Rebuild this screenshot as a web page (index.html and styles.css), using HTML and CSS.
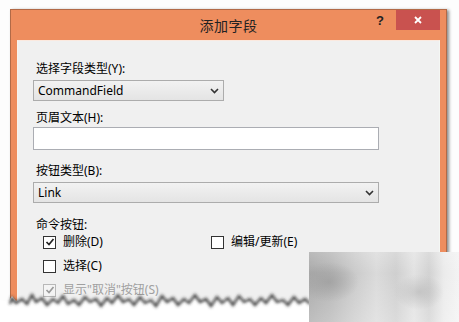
FILE: index.html
```html
<!DOCTYPE html>
<html lang="zh">
<head>
<meta charset="utf-8">
<link rel="stylesheet" href="styles.css">
</head>
<body>
<div class="window">
  <div class="titlebar">
    <div></div>
    <div class="title">添加字段</div>
    <div class="controls">
      <span class="help">?</span>
      <span class="close">
        <svg width="10" height="10" viewBox="0 0 10 10"><path d="M2 2L8 8M8 2L2 8" stroke="#fff" stroke-width="1.8"/></svg>
      </span>
    </div>
  </div>
  <div class="content">
    <div class="label">选择字段类型(Y):</div>
    <div class="select short"><span>CommandField</span><svg class="chev" width="9" height="6" viewBox="0 0 9 6"><path d="M1 1L4.5 4.5L8 1" fill="none" stroke="#333" stroke-width="1.6"/></svg></div>
    <div class="label l2">页眉文本(H):</div>
    <div class="input"></div>
    <div class="label l3">按钮类型(B):</div>
    <div class="select wide"><span>Link</span><svg class="chev" width="9" height="6" viewBox="0 0 9 6"><path d="M1 1L4.5 4.5L8 1" fill="none" stroke="#333" stroke-width="1.6"/></svg></div>
    <div class="label l4">命令按钮:</div>
    <div class="checks">
      <label class="check"><span class="box"><svg width="10" height="10" viewBox="0 0 10 10"><path d="M1.5 5L4 7.5L8.5 2" fill="none" stroke="#222" stroke-width="1.7"/></svg></span>删除(D)</label>
      <label class="check"><span class="box"></span>编辑/更新(E)</label>
      <label class="check"><span class="box"></span>选择(C)</label>
      <span></span>
      <label class="check disabled"><span class="box"><svg width="10" height="10" viewBox="0 0 10 10"><path d="M1.5 5L4 7.5L8.5 2" fill="none" stroke="#9a9a9a" stroke-width="1.7"/></svg></span>显示"取消"按钮(S)</label>
    </div>
  </div>
</div>
<svg class="tear" width="459" height="37" viewBox="0 285 459 37">
  <defs><filter id="bl" x="-5%" y="-50%" width="110%" height="200%"><feGaussianBlur stdDeviation="1.4"/></filter></defs>
  <polygon fill="#fff" points="0,330 0,300 8,302 12,296 16,301 22,297 27,302 32,293 36,300 42,296 47,303 53,297 58,301 63,294 68,302 74,298 79,303 85,295 90,300 96,297 101,304 107,296 112,301 118,293 123,300 129,297 134,303 140,295 145,301 151,298 156,304 162,294 167,300 173,296 178,303 184,297 189,301 195,293 200,300 206,297 211,304 217,295 222,301 228,296 233,303 239,294 244,300 250,297 255,303 261,296 266,301 272,293 277,300 283,298 288,303 294,295 299,301 305,297 310,302 459,302 459,330"/>
  <polyline filter="url(#bl)" transform="translate(0,2)" fill="none" stroke="#333" stroke-width="2.2" points="10,302 12,296 16,301 22,297 27,302 32,293 36,300 42,296 47,303 53,297 58,301 63,294 68,302 74,298 79,303 85,295 90,300 96,297 101,304 107,296 112,301 118,293 123,300 129,297 134,303 140,295 145,301 151,298 156,304 162,294 167,300 173,296 178,303 184,297 189,301 195,293 200,300 206,297 211,304 217,295 222,301 228,296 233,303 239,294 244,300 250,297 255,303 261,296 266,301 272,293 277,300 283,298 288,303 294,295 299,301 305,297 310,302"/>
</svg>
<div class="mosaic"></div>
</body>
</html>
```
FILE: styles.css
```css
html, body {
  margin: 0;
  padding: 0;
}
body {
  width: 459px;
  height: 322px;
  overflow: hidden;
  background: #fdfdfd;
  position: relative;
  font-family: "Noto Sans", "Noto Sans CJK SC", sans-serif;
  font-size: 12px;
  color: #000;
}
.window {
  margin: 9px 0 0 10px;
  width: 435px;
  height: 310px;
  background: #ee8d5e;
  border: 1px solid #b26a47;
  box-shadow: 2px 1px 3px rgba(0, 0, 0, 0.45);
  display: flex;
  flex-direction: column;
}
.titlebar {
  height: 30px;
  display: grid;
  grid-template-columns: 1fr auto 1fr;
  align-items: start;
}
.title {
  font-family: "Noto Sans CJK SC", sans-serif;
  font-size: 14px;
  line-height: 30px;
  color: #222;
  letter-spacing: 0.5px;
}
.controls {
  display: flex;
  justify-content: flex-end;
  align-items: flex-start;
  padding-right: 6px;
}
.help {
  font-family: "Liberation Sans", sans-serif;
  font-weight: bold;
  font-size: 13px;
  color: #222;
  margin-top: 3px;
  margin-right: 12px;
}
.close {
  width: 44px;
  height: 20px;
  background: #c9524f;
  display: flex;
  align-items: center;
  justify-content: center;
}
.content {
  flex: 1;
  margin: 0 6px;
  background: #f0f0f0;
  border-top: 1px solid #fbe9df;
  border-left: 1px solid #f8f4ee;
  border-right: 1px solid #f4f7f4;
  padding: 20px 0 0 15px;
}
.label {
  line-height: 16px;
  padding-left: 3px;
  height: 16px;
}
.l2 { margin-top: 9px; }
.l3 { margin-top: 13px; }
.l4 { margin-top: 14px; }
.select {
  margin-top: 3px;
  border: 1px solid #acacac;
  background: linear-gradient(#f2f2f2, #e4e4e4);
  display: flex;
  align-items: center;
  justify-content: space-between;
  padding: 0 4px 0 4px;
  box-sizing: border-box;
  height: 21px;
}
.select.short { width: 191px; }
.select.wide { width: 346px; }
.input {
  margin-top: 1px;
  width: 346px;
  height: 23px;
  box-sizing: border-box;
  border: 1px solid #abadb3;
  background: #fff;
}
.checks {
  margin-top: 1px;
  padding-left: 10px;
  display: grid;
  grid-template-columns: 168px auto;
  row-gap: 8px;
}
.check {
  display: flex;
  align-items: center;
  gap: 7px;
  height: 16px;
  line-height: 16px;
}
.box {
  width: 11px;
  height: 11px;
  border: 1px solid #333;
  background: #fff;
  display: flex;
  align-items: center;
  justify-content: center;
}
.disabled { color: #a0a0a0; }
.disabled .box { border-color: #b8b8b8; background: #f4f4f4; }
.tear {
  position: absolute;
  left: 0;
  top: 285px;
}
.mosaic {
  position: absolute;
  left: 309px;
  top: 252px;
  width: 150px;
  height: 70px;
  background:
    radial-gradient(ellipse 30px 20px at 20px 30px, rgba(150,150,150,0.6), rgba(150,150,150,0)),
    radial-gradient(ellipse 25px 18px at 110px 40px, rgba(170,170,170,0.5), rgba(170,170,170,0)),
    linear-gradient(180deg, rgba(255,255,255,0.2) 0%, rgba(255,255,255,0) 30%, rgba(255,255,255,0.25) 100%),
    linear-gradient(90deg, #a9a9a9 0%, #b5b5b5 14%, #cacaca 30%, #dadada 45%, #cfcfcf 58%, #e2e2e2 70%, #d2d2d2 80%, #ebebeb 90%, #f3f3f3 100%);
}
```
